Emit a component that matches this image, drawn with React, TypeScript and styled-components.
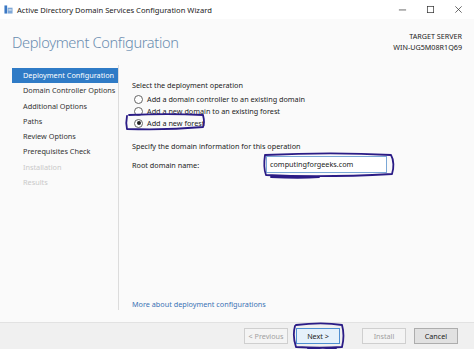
import React from "react";
import styled, { createGlobalStyle } from "styled-components";

const GlobalStyle = createGlobalStyle`
  html, body { margin: 0; padding: 0; background: #fff; }
  body { font-family: "Noto Sans", "Open Sans", sans-serif; }
`;

const steps = [
  { label: "Deployment Configuration", state: "active" },
  { label: "Domain Controller Options", state: "normal" },
  { label: "Additional Options", state: "normal" },
  { label: "Paths", state: "normal" },
  { label: "Review Options", state: "normal" },
  { label: "Prerequisites Check", state: "normal" },
  { label: "Installation", state: "disabled" },
  { label: "Results", state: "disabled" },
];

const operations = [
  { label: "Add a domain controller to an existing domain", checked: false },
  { label: "Add a new domain to an existing forest", checked: false },
  { label: "Add a new forest", checked: true },
];

export default function App() {
  return (
    <>
      <GlobalStyle />
      <Window>
        <TitleBar>
          <AppIcon viewBox="0 0 10 10">
            <rect x="0.5" y="0.5" width="3" height="9" fill="#3b78c4" />
            <rect x="4" y="3" width="5.5" height="6.5" fill="#7fa8d8" />
            <rect x="5" y="5" width="3.5" height="1" fill="#fff" />
          </AppIcon>
          <TitleText>Active Directory Domain Services Configuration Wizard</TitleText>
          <Controls>
            <ControlIcon viewBox="0 0 10 10">
              <line x1="1" y1="5.5" x2="9" y2="5.5" stroke="#333" strokeWidth="0.8" />
            </ControlIcon>
            <ControlIcon viewBox="0 0 10 10">
              <rect x="1.5" y="1.5" width="7" height="7" fill="none" stroke="#333" strokeWidth="0.8" />
            </ControlIcon>
            <ControlIcon viewBox="0 0 10 10">
              <path d="M1.5 1.5 L8.5 8.5 M8.5 1.5 L1.5 8.5" stroke="#333" strokeWidth="0.8" />
            </ControlIcon>
          </Controls>
        </TitleBar>

        <Header>
          <PageTitle>Deployment Configuration</PageTitle>
          <Target>
            <div>TARGET SERVER</div>
            <div>WIN-UG5M08R1Q69</div>
          </Target>
        </Header>

        <Body>
          <Nav>
            {steps.map((s) => (
              <NavItem key={s.label} $state={s.state}>
                {s.label}
              </NavItem>
            ))}
          </Nav>
          <Content>
            <Label>Select the deployment operation</Label>
            <RadioList>
              {operations.map((o) => (
                <RadioRow key={o.label}>
                  <Radio $checked={o.checked} />
                  {o.label}
                </RadioRow>
              ))}
              <Ink style={{ left: -9, top: 20, width: 86, height: 18 }} viewBox="0 0 86 18" preserveAspectRatio="none">
                <path d="M4 3 C3 8 3 12 4 16 C30 17 58 16 80 14 C82 10 81 6 80 2 C58 1 30 1 6 2" />
              </Ink>
            </RadioList>
            <Label $top={11}>Specify the domain information for this operation</Label>
            <FieldRow>
              <FieldLabel>Root domain name:</FieldLabel>
              <InputWrap>
                <TextBox>computingforgeeks.com</TextBox>
                <Ink style={{ left: -5, top: -4, width: 136, height: 27 }} viewBox="0 0 136 27" preserveAspectRatio="none">
                  <path d="M4 3 C3 10 3 18 5 23 C45 25 95 24 131 22 C133 16 133 8 130 3 C95 1 45 1 4 3 M10 25 C30 26 45 26 58 25" />
                </Ink>
              </InputWrap>
            </FieldRow>
            <Spacer />
            <MoreLink>More about deployment configurations</MoreLink>
          </Content>
        </Body>

        <Footer>
          <Button $disabled>&lt; Previous</Button>
          <NextWrap>
            <Button $focus>Next &gt;</Button>
            <Ink style={{ left: -6, top: -7, width: 56, height: 30 }} viewBox="0 0 56 30" preserveAspectRatio="none">
              <path d="M5 5 C3 12 4 20 6 26 C22 27 38 27 52 26 C54 18 54 11 52 4 C40 2 22 2 6 4 M18 28 C28 29 38 29 46 28" />
            </Ink>
          </NextWrap>
          <Gap />
          <Button $disabled>Install</Button>
          <Button>Cancel</Button>
        </Footer>
      </Window>
    </>
  );
}

const Window = styled.div`
  width: 474px;
  height: 349px;
  display: flex;
  flex-direction: column;
  background: #fafafa;
  overflow: hidden;
  color: #1e1e1e;
`;

const TitleBar = styled.div`
  height: 19px;
  display: flex;
  align-items: center;
  background: #fff;
  padding-left: 4px;
`;

const AppIcon = styled.svg`
  width: 9px;
  height: 9px;
  margin-right: 4px;
`;

const TitleText = styled.span`
  font-size: 7.6px;
  color: #222;
  flex: 1;
`;

const Controls = styled.div`
  display: flex;
  gap: 19px;
  padding-right: 11px;
`;

const ControlIcon = styled.svg`
  width: 9px;
  height: 9px;
`;

const Header = styled.div`
  height: 46px;
  display: flex;
  justify-content: space-between;
  padding: 0 12px;
`;

const PageTitle = styled.div`
  font-family: "Noto Sans", "Open Sans", sans-serif;
  font-size: 14.6px;
  font-weight: 300;
  letter-spacing: -0.35px;
  color: #6b8db0;
  padding-top: 13px;
`;

const Target = styled.div`
  text-align: right;
  font-size: 7.2px;
  line-height: 11px;
  color: #222;
  padding-top: 12px;
`;

const Body = styled.div`
  flex: 1;
  display: flex;
  padding-bottom: 12px;
`;

const Nav = styled.div`
  width: 119px;
  padding: 3px 0 0 12px;
  box-sizing: border-box;
  border-right: 1px solid #dcdcdc;
  display: flex;
  flex-direction: column;
`;

const NavItem = styled.div<{ $state: string }>`
  height: 15.3px;
  line-height: 15.3px;
  padding-left: 11px;
  font-size: 7.3px;
  white-space: nowrap;
  overflow: hidden;
  background: ${({ $state }) => ($state === "active" ? "#2f7bc6" : "transparent")};
  color: ${({ $state }) =>
    $state === "active" ? "#fff" : $state === "disabled" ? "#c9c9c9" : "#333"};
`;

const Content = styled.div`
  flex: 1;
  padding: 14px 0 0 13px;
  display: flex;
  flex-direction: column;
  font-size: 7.25px;
`;

const Label = styled.div<{ $top?: number }>`
  margin-top: ${({ $top }) => $top ?? 0}px;
  height: 12px;
  line-height: 12px;
  color: #222;
`;

const RadioList = styled.div`
  position: relative;
  display: flex;
  flex-direction: column;
  margin-top: 2px;
`;

const RadioRow = styled.div`
  height: 12px;
  display: flex;
  align-items: center;
  gap: 4px;
  color: #222;
`;

const Radio = styled.span<{ $checked: boolean }>`
  width: 7px;
  height: 7px;
  border-radius: 50%;
  border: 1px solid #666;
  background: #fff;
  margin-left: 2px;
  display: inline-flex;
  align-items: center;
  justify-content: center;
  &::after {
    content: "";
    width: 4px;
    height: 4px;
    border-radius: 50%;
    background: ${({ $checked }) => ($checked ? "#222" : "transparent")};
  }
`;

const FieldRow = styled.div`
  display: flex;
  align-items: center;
  margin-top: 4px;
`;

const FieldLabel = styled.div`
  width: 134px;
  color: #222;
`;

const InputWrap = styled.div`
  position: relative;
`;

const TextBox = styled.div`
  width: 121px;
  height: 17px;
  box-sizing: border-box;
  border: 1px solid #7aa7d6;
  background: #fff;
  padding-left: 3px;
  line-height: 15px;
  color: #222;
`;

const Ink = styled.svg`
  position: absolute;
  overflow: visible;
  pointer-events: none;
  path {
    fill: none;
    stroke: #2b1c86;
    stroke-width: 1.8;
    stroke-linecap: round;
    vector-effect: non-scaling-stroke;
  }
`;

const Spacer = styled.div`
  flex: 1;
`;

const MoreLink = styled.div`
  color: #3a73b5;
  margin-bottom: 1px;
`;

const Footer = styled.div`
  height: 26px;
  background: #f0f0f0;
  border-top: 1px solid #e2e2e2;
  display: flex;
  align-items: center;
  padding: 0 15px 0 244px;
  gap: 8px;
`;

const NextWrap = styled.div`
  position: relative;
`;

const Gap = styled.div`
  width: 6px;
`;

const Button = styled.div<{ $disabled?: boolean; $focus?: boolean }>`
  width: 44px;
  height: 16px;
  box-sizing: border-box;
  display: flex;
  align-items: center;
  justify-content: center;
  font-size: 7.2px;
  border: 1px solid ${({ $focus }) => ($focus ? "#4f8fd1" : "#adadad")};
  background: ${({ $disabled, $focus }) => ($disabled ? "#f4f4f4" : $focus ? "#e5f1fb" : "#e1e1e1")};
  color: ${({ $disabled }) => ($disabled ? "#a0a0a0" : "#222")};
  border-color: ${({ $disabled, $focus }) => ($disabled ? "#cfcfcf" : $focus ? "#4f8fd1" : "#adadad")};
`;
